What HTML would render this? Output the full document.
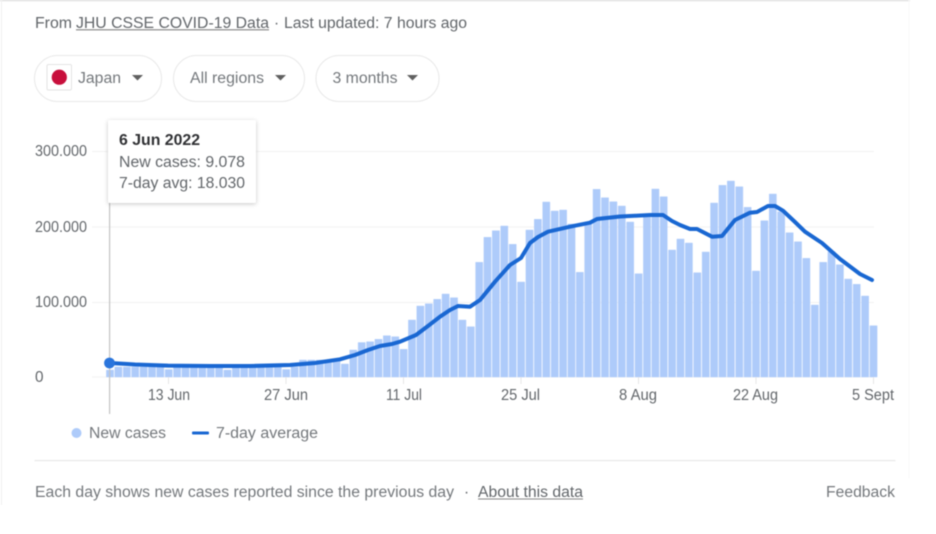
<!DOCTYPE html>
<html><head><meta charset="utf-8"><style>
html,body{margin:0;padding:0;background:#fff;width:936px;height:534px;overflow:hidden}
svg{display:block;filter:blur(0.4px)}
text{font-family:"Liberation Sans",Arial,sans-serif;font-size:15.3px;fill:#62666a}
.p{fill:#74787c}
</style></head><body>
<svg width="936" height="534" viewBox="0 0 936 534" xmlns="http://www.w3.org/2000/svg">
<defs><filter id="s" x="-10%" y="-10%" width="120%" height="125%"><feDropShadow dx="0" dy="1" stdDeviation="2" flood-color="#000" flood-opacity=".22"/></filter></defs>
<rect x="0" y="0" width="910" height="1.2" fill="#dcdcdc"/>
<rect x="1" y="0" width="1" height="505" fill="#f0f0f0"/>
<rect x="908.500" y="0" width="1" height="478" fill="#f8f8f8"/>

<text x="35" y="28" textLength="37" lengthAdjust="spacingAndGlyphs">From</text>
<text x="76" y="28" textLength="193" lengthAdjust="spacingAndGlyphs">JHU CSSE COVID-19 Data</text>
<rect x="76" y="29.300" width="193" height="1" fill="#777"/>
<text x="274" y="28">·</text>
<text x="284" y="28" textLength="183" lengthAdjust="spacingAndGlyphs">Last updated: 7 hours ago</text>

<rect x="34.500" y="55.500" width="127" height="46" rx="23" fill="#fff" stroke="#e8e8e8"/>
<rect x="173.500" y="55.500" width="131" height="46" rx="23" fill="#fff" stroke="#e8e8e8"/>
<rect x="316" y="55.500" width="123" height="46" rx="23" fill="#fff" stroke="#e8e8e8"/>
<rect x="47" y="64.500" width="24.500" height="25.500" rx="1.500" fill="#fff" stroke="#e4e4e4"/>
<circle cx="59.300" cy="77.200" r="7.600" fill="#c80f3c"/>
<text class="p" x="78" y="83" textLength="43" lengthAdjust="spacingAndGlyphs">Japan</text>
<path d="M132 75h11l-5.500 5.500z" fill="#606060"/>
<text class="p" x="190" y="83" textLength="74" lengthAdjust="spacingAndGlyphs">All regions</text>
<path d="M275 75h11l-5.500 5.500z" fill="#606060"/>
<text class="p" x="332.500" y="83" textLength="65" lengthAdjust="spacingAndGlyphs">3 months</text>
<path d="M407 75h11l-5.500 5.500z" fill="#606060"/>

<g fill="#f2f2f2">
<rect x="92" y="151" width="782" height="1"/>
<rect x="92" y="226.500" width="782" height="1"/>
<rect x="92" y="302" width="782" height="1"/>
<rect x="92" y="376.500" width="782" height="1"/>
</g>
<text x="35" y="156" textLength="52" lengthAdjust="spacingAndGlyphs">300.000</text>
<text x="35" y="232" textLength="52" lengthAdjust="spacingAndGlyphs">200.000</text>
<text x="35" y="307" textLength="52" lengthAdjust="spacingAndGlyphs">100.000</text>
<text x="35" y="382">0</text>

<path fill="#aecbfa" stroke="#aecbfa" stroke-width="0.4" d="M106.400 370h7.200V377h-7.200zM114.800 367h7.200V377h-7.200zM123.200 367h7.200V377h-7.200zM131.600 367h7.200V377h-7.200zM140 367h7.200V377h-7.200zM148.400 367h7.200V377h-7.200zM156.700 367h7.200V377h-7.200zM165.100 369.500h7.200V377h-7.200zM173.500 367h7.200V377h-7.200zM181.900 367h7.200V377h-7.200zM190.300 367h7.200V377h-7.200zM198.700 367h7.200V377h-7.200zM207.100 367h7.200V377h-7.200zM215.500 367h7.200V377h-7.200zM223.900 370h7.200V377h-7.200zM232.300 367h7.200V377h-7.200zM240.600 367h7.200V377h-7.200zM249 367h7.200V377h-7.200zM257.400 367h7.200V377h-7.200zM265.800 367h7.200V377h-7.200zM274.200 367h7.200V377h-7.200zM282.600 369.500h7.200V377h-7.200zM291 367h7.200V377h-7.200zM299.400 360h7.200V377h-7.200zM307.800 360h7.200V377h-7.200zM316.200 360h7.200V377h-7.200zM324.500 360h7.200V377h-7.200zM332.900 360h7.200V377h-7.200zM341.300 364h7.200V377h-7.200zM349.700 350h7.200V377h-7.200zM358.100 342.500h7.200V377h-7.200zM366.500 341.700h7.200V377h-7.200zM374.900 339.300h7.200V377h-7.200zM383.300 335.700h7.200V377h-7.200zM391.700 336.700h7.200V377h-7.200zM400 349.300h7.200V377h-7.200zM408.400 320h7.200V377h-7.200zM416.800 306h7.200V377h-7.200zM425.200 303.700h7.200V377h-7.200zM433.600 299.300h7.200V377h-7.200zM442 294h7.200V377h-7.200zM450.400 297.700h7.200V377h-7.200zM458.800 320h7.200V377h-7.200zM467.200 326.700h7.200V377h-7.200zM475.600 262.300h7.200V377h-7.200zM483.900 237.300h7.200V377h-7.200zM492.300 230.700h7.200V377h-7.200zM500.700 226h7.200V377h-7.200zM509.100 244.300h7.200V377h-7.200zM517.500 282h7.200V377h-7.200zM525.900 230h7.200V377h-7.200zM534.300 219.300h7.200V377h-7.200zM542.700 202h7.200V377h-7.200zM551.100 211h7.200V377h-7.200zM559.500 210h7.200V377h-7.200zM567.900 224h7.200V377h-7.200zM576.200 272.300h7.200V377h-7.200zM584.600 222h7.200V377h-7.200zM593 189.300h7.200V377h-7.200zM601.400 197.700h7.200V377h-7.200zM609.800 201.700h7.200V377h-7.200zM618.200 206h7.200V377h-7.200zM626.600 222h7.200V377h-7.200zM635 273.700h7.200V377h-7.200zM643.400 215h7.200V377h-7.200zM651.800 189h7.200V377h-7.200zM660.100 196.700h7.200V377h-7.200zM668.500 250h7.200V377h-7.200zM676.900 239h7.200V377h-7.200zM685.300 243h7.200V377h-7.200zM693.700 272.700h7.200V377h-7.200zM702.100 252h7.200V377h-7.200zM710.500 203h7.200V377h-7.200zM718.900 185.300h7.200V377h-7.200zM727.300 181h7.200V377h-7.200zM735.700 186.700h7.200V377h-7.200zM744 207.300h7.200V377h-7.200zM752.400 271h7.200V377h-7.200zM760.800 220.700h7.200V377h-7.200zM769.200 194h7.200V377h-7.200zM777.600 211.700h7.200V377h-7.200zM786 232.700h7.200V377h-7.200zM794.400 241.700h7.200V377h-7.200zM802.800 258.300h7.200V377h-7.200zM811.200 305h7.200V377h-7.200zM819.600 262.300h7.200V377h-7.200zM827.900 251.700h7.200V377h-7.200zM836.300 264.700h7.200V377h-7.200zM844.700 279h7.200V377h-7.200zM853.100 284.300h7.200V377h-7.200zM861.500 296h7.200V377h-7.200zM869.900 325.700h7.200V377h-7.200z"/>

<g fill="#e6e6e6">
<rect x="168" y="377" width="1" height="7"/>
<rect x="285.500" y="377" width="1" height="7"/>
<rect x="403" y="377" width="1" height="7"/>
<rect x="520.500" y="377" width="1" height="7"/>
<rect x="638" y="377" width="1" height="7"/>
<rect x="755.500" y="377" width="1" height="7"/>
<rect x="873" y="377" width="1" height="7"/>
</g>
<rect x="109" y="200" width="1.200" height="214" fill="#c2c2c2"/>

<polyline fill="none" stroke="#1967d2" stroke-width="4" stroke-linejoin="round" stroke-linecap="round" points="110,363 135,364.500 168,365.600 210,366 250,366 290,365 315,363 340,359.300 355,355 368,350 380,346 392,344 400,341.700 416,335 428,326 440,316.700 450,310 458,306 470,306.700 480,300 495,281.700 510,265 521,258 530,243 538,237 548,231.700 570,226.700 590,222.700 597,219 620,216.500 650,215 663,215 672,221 680,225 690,229 697,229 712,236.700 722,236 735,220 750,212.700 757,212 768,206 775,206 783,210.700 795,222 805,231.700 822,243 840,259 860,274 872,280"/>
<circle cx="109.500" cy="363" r="5.400" fill="#2a75dc"/>

<rect x="108" y="120" width="148" height="83" rx="2" fill="#fff" filter="url(#s)"/>
<text x="119" y="145" textLength="81" lengthAdjust="spacingAndGlyphs" font-weight="700" style="fill:#303134">6 Jun 2022</text>
<text x="119" y="167" textLength="126" lengthAdjust="spacingAndGlyphs">New cases: 9.078</text>
<text x="119" y="188" textLength="126" lengthAdjust="spacingAndGlyphs">7-day avg: 18.030</text>

<text x="148" y="400" textLength="42" lengthAdjust="spacingAndGlyphs">13 Jun</text>
<text x="264" y="400" textLength="44" lengthAdjust="spacingAndGlyphs">27 Jun</text>
<text x="386" y="400" textLength="36" lengthAdjust="spacingAndGlyphs">11 Jul</text>
<text x="501" y="400" textLength="39" lengthAdjust="spacingAndGlyphs">25 Jul</text>
<text x="619" y="400" textLength="38" lengthAdjust="spacingAndGlyphs">8 Aug</text>
<text x="733" y="400" textLength="45" lengthAdjust="spacingAndGlyphs">22 Aug</text>
<text x="852" y="400" textLength="42" lengthAdjust="spacingAndGlyphs">5 Sept</text>

<circle cx="76.500" cy="433" r="5" fill="#aecbfa"/>
<text class="p" x="89" y="438" textLength="77" lengthAdjust="spacingAndGlyphs">New cases</text>
<rect x="192" y="431.500" width="17" height="3" rx="1" fill="#1967d2"/>
<text class="p" x="216" y="438" textLength="102" lengthAdjust="spacingAndGlyphs">7-day average</text>

<rect x="34.500" y="460" width="861" height="1.200" fill="#e8e8e8"/>
<text class="p" x="35" y="497" textLength="419" lengthAdjust="spacingAndGlyphs">Each day shows new cases reported since the previous day</text>
<text x="464" y="497">·</text>
<text x="478" y="497" textLength="105" lengthAdjust="spacingAndGlyphs">About this data</text>
<rect x="478" y="498.500" width="105" height="1" fill="#888"/>
<text class="p" x="826" y="497" textLength="69" lengthAdjust="spacingAndGlyphs">Feedback</text>
</svg>
</body></html>
